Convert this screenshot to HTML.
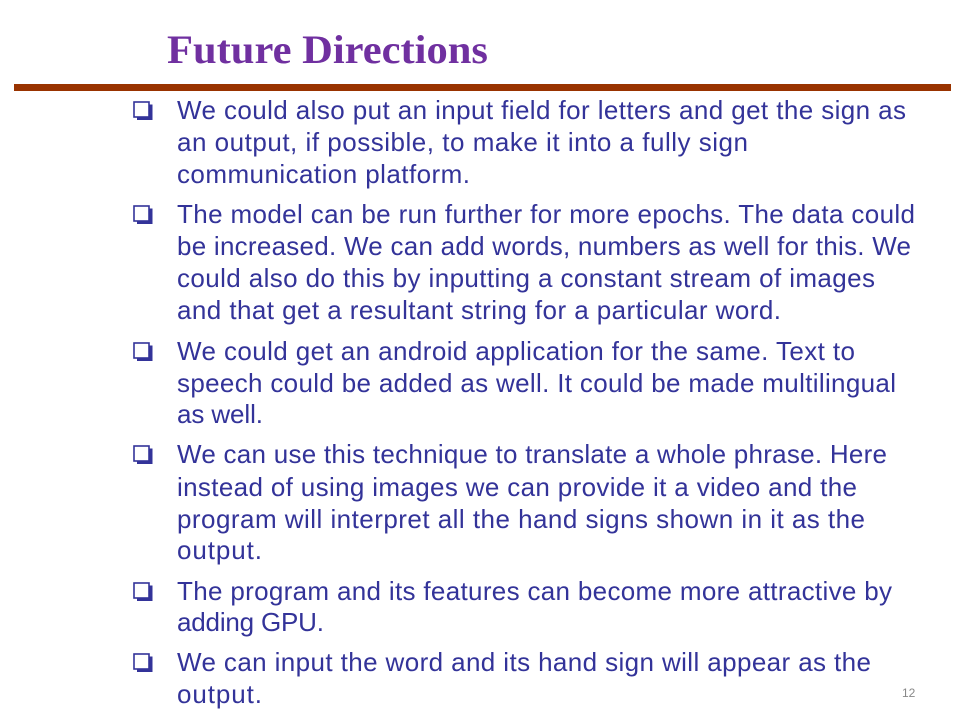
<!DOCTYPE html>
<html><head><meta charset="utf-8"><style>
html,body{margin:0;padding:0;background:#fff;}
svg{display:block}
</style></head><body>
<svg width="960" height="720" xmlns="http://www.w3.org/2000/svg">
<text x="167" y="63" font-family="Liberation Serif, serif" font-weight="bold" font-size="40" fill="#7030A0" textLength="321" lengthAdjust="spacingAndGlyphs">Future Directions</text>
<rect x="14" y="84" width="937" height="7" fill="#993300"/>
<defs>
<g id="b"><rect x="0" y="0" width="15" height="15" fill="#fff" stroke="#333399" stroke-width="1.6"/><path d="M3 16.5 H17 V2.5" fill="none" stroke="#333399" stroke-width="3"/></g>
</defs>
<g>
<use href="#b" x="134" y="102"/>
<use href="#b" x="134" y="206"/>
<use href="#b" x="134" y="343"/>
<use href="#b" x="134" y="446"/>
<use href="#b" x="134" y="583"/>
<use href="#b" x="134" y="654"/>
</g>
<g font-family="Liberation Sans, sans-serif" font-size="26" fill="#333399" lengthAdjust="spacingAndGlyphs">
<text x="177" y="119" textLength="729">We could also put an input field for letters and get the sign as</text>
<text x="177" y="151" textLength="571">an output, if possible, to make it into a fully sign</text>
<text x="177" y="183" textLength="293">communication platform.</text>
<text x="177" y="223" textLength="738">The model can be run further for more epochs. The data could</text>
<text x="177" y="255" textLength="734">be increased. We can add words, numbers as well for this. We</text>
<text x="177" y="287" textLength="698">could also do this by inputting a constant stream of images</text>
<text x="177" y="319" textLength="604">and that get a resultant string for a particular word.</text>
<text x="177" y="360" textLength="678">We could get an android application for the same. Text to</text>
<text x="177" y="392" textLength="719">speech could be added as well. It could be made multilingual</text>
<text x="177" y="423" textLength="86">as well.</text>
<text x="177" y="463" textLength="710">We can use this technique to translate a whole phrase. Here</text>
<text x="177" y="496" textLength="680">instead of using images we can provide it a video and the</text>
<text x="177" y="528" textLength="688">program will interpret all the hand signs shown in it as the</text>
<text x="177" y="559" textLength="85">output.</text>
<text x="177" y="600" textLength="715">The program and its features can become more attractive by</text>
<text x="177" y="631" textLength="147">adding GPU.</text>
<text x="177" y="671" textLength="694">We can input the word and its hand sign will appear as the</text>
<text x="177" y="703" textLength="85">output.</text>
</g>
<text x="902" y="697" font-family="Liberation Sans, sans-serif" font-size="12" fill="#888">12</text>
</svg>
</body></html>
